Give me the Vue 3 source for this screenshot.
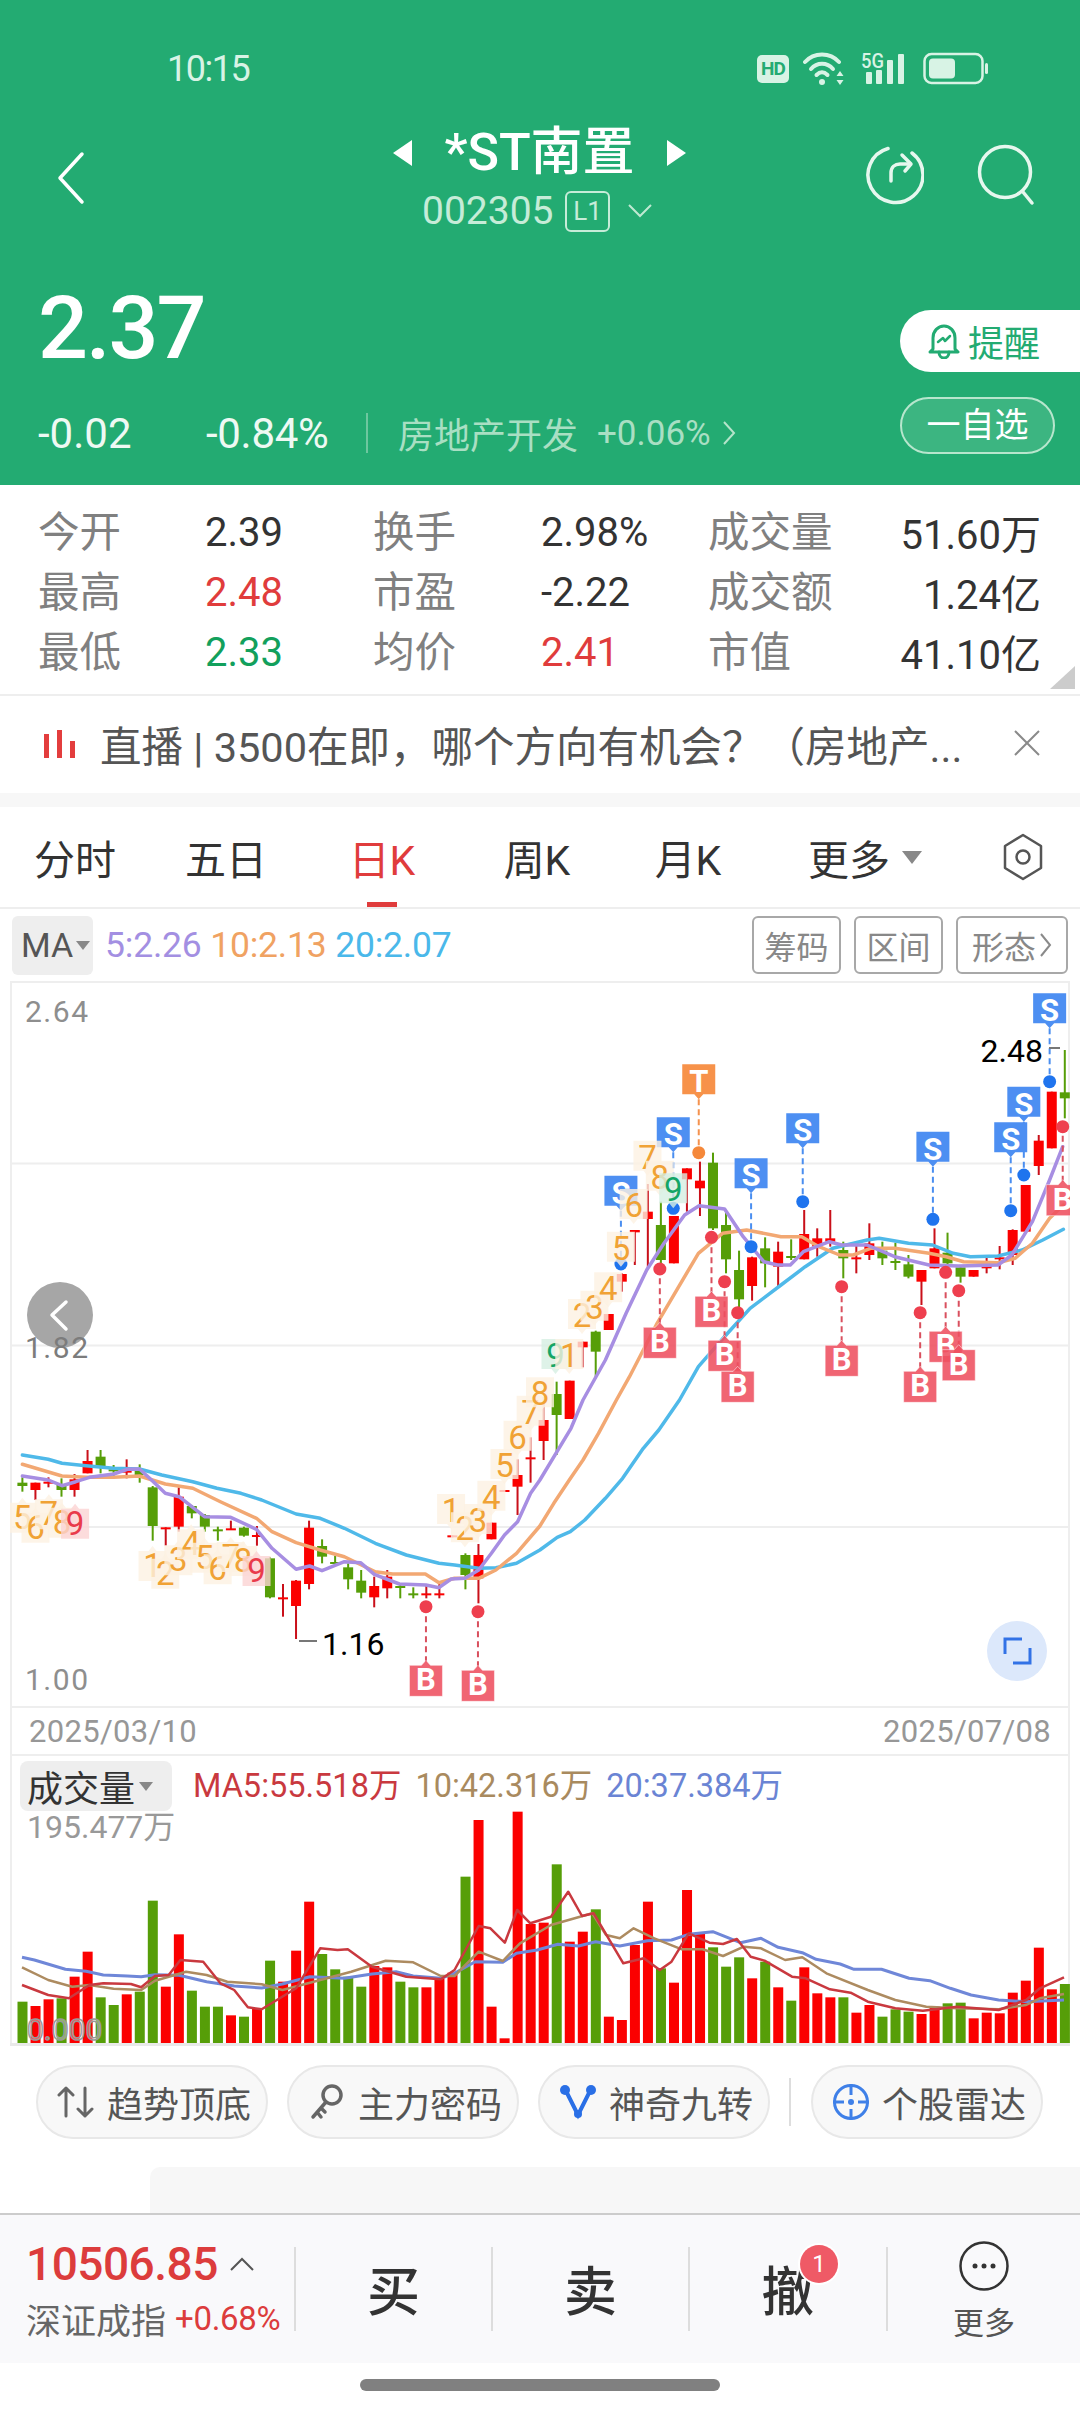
<script setup>
const z5 = ([X, Y]) => [X / 2.904, 1400 + Y / 3]
const z4 = ([X, Y]) => [540 + X / 2.904, 980 + Y / 3]
const z6 = ([X, Y]) => [540 + X / 2.904, 1400 + Y / 3]
const z7 = ([X, Y]) => [X / 1.452, 1750 + Y / 3]
const pts = (a) => a.map((p) => p[0].toFixed(1) + ',' + p[1].toFixed(1)).join(' ')

// colour, wick top, wick bottom, body top, body bottom, in crop units
const rawA = [
  ['g',232,275,248,258],['r',248,300,248,270],['r',232,262,245,248],['g',235,290,252,270],['r',222,290,238,270],
  ['r',150,220,183,220],['g',150,220,170,200],['g',195,235,208,214],['r',178,235,208,218],['g',193,248,210,225],
  ['g',258,422,262,378],['r',382,437,382,388],['r',262,395,290,380],['g',315,355,318,340],['g',342,395,345,380],
  ['g',380,422,388,392],['r',362,390,385,390],['g',380,410,383,407],['r',378,437,405,408],['g',472,595,475,592],
  ['r',552,650,592,596],['r',540,717,542,618],['r',362,568,383,552],['g',418,490,438,470],['g',468,490,486,490],
  ['g',490,568,502,538],['g',510,595,542,578],['r',530,622,558,592],['r',510,595,530,565],['g',555,595,558,563],
  ['g',562,595,580,583],['r',552,595,580,583],['r',552,595,580,583],['r',406,410,406,410],['g',460,568,465,525],
  ['r',432,610,465,535],['r',368,418,368,418],['r',270,274,270,274],['r',178,345,225,260],['r',112,248,172,177],
]
const rawB = [
  ['r',1251,1440,1320,1383],
  ['g',1205,1425,1242,1305],['r',1202,1317,1202,1317],['r',1085,1162,1085,1102],['g',1052,1195,1055,1115],['r',1002,1050,1002,1050],
  ['r',880,935,882,905],['r',750,855,750,757],['r',612,868,695,717],['g',665,865,735,840],['r',708,850,708,850],
  ['r',565,695,565,598],['r',545,708,602,625],['g',518,750,548,745],['g',698,880,735,838],['g',812,985,870,958],
  ['r',830,962,832,918],['g',772,922,805,850],['r',785,918,815,860],['g',778,840,828,832],['r',690,838,762,838],
  ['r',745,830,775,800],['r',690,800,775,785],['g',785,895,810,835],['r',795,880,832,838],['r',730,840,790,825],
  ['g',785,855,812,835],['g',788,870,843,848],['g',825,895,853,890],['r',870,975,870,905],['r',745,865,805,865],
  ['g',758,870,818,850],['g',855,908,862,890],['r',870,890,870,890],['r',828,880,852,865],['r',798,868,832,838],
  ['r',748,855,750,825],['r',615,755,615,755],['r',465,585,482,558],['r',335,505,335,505],['g',210,415,337,355],
]
const yA = (Y) => 1400 + Y / 3
const yB = (Y) => 980 + Y / 3
const candles = [
  ...rawA.map((c) => [c[0], yA(c[1]), yA(c[2]), yA(c[3]), yA(c[4])]),
  ...rawB.map((c) => [c[0], yB(c[1]), yB(c[2]), yB(c[3]), yB(c[4])]),
].map((c, i) => ({
  x: 22.4 + 13.03 * i,
  fill: c[0] === 'r' ? '#fb0000' : '#569e08',
  wick: c[0] === 'r' ? '#c9101a' : '#569e08',
  wt: c[1],
  wh: Math.max(c[2] - c[1], 2),
  bt: c[3],
  bh: Math.max(c[4] - c[3], 2),
}))

const maBlue = pts([
  ...[[65,165],[140,178],[180,190],[250,197],[330,205],[405,207],[470,225],[560,245],[630,265],[700,280],[760,300],[860,342],[930,355],[1000,385],[1090,430],[1180,465],[1275,490],[1320,495],[1390,505],[1440,503],[1500,490],[1568,450]].map(z5),
  ...[[50,412],[88,395],[130,360],[190,295],[240,235],[300,145],[345,90],[405,0]].map(z6),
  ...[[460,1160],[540,1065],[610,985],[700,915],[770,860],[850,805],[950,780],[985,775],[1070,790],[1140,795],[1200,820],[1250,830],[1330,828],[1400,810],[1460,780],[1520,748]].map(z4),
])
const maOrange = pts([
  ...[[65,193],[180,228],[250,232],[330,232],[405,228],[480,252],[560,265],[640,305],[745,355],[790,395],[860,428],[930,450],[1000,470],[1090,515],[1140,522],[1235,522],[1275,548],[1320,535],[1390,535],[1440,510],[1500,460],[1568,378]].map(z5),
  ...[[40,310],[85,240],[125,180],[170,100],[222,0]].map(z6),
  ...[[260,1190],[340,1030],[460,820],[530,760],[600,750],[700,770],[760,770],[810,800],[870,825],[910,825],[960,805],[1030,805],[1130,820],[1180,830],[1230,845],[1330,848],[1380,835],[1430,790],[1480,715],[1520,675]].map(z4),
])
const maPurple = pts([
  ...[[65,228],[140,240],[180,257],[220,245],[260,232],[330,222],[370,208],[405,207],[440,240],[480,280],[520,290],[594,350],[670,352],[745,388],[790,445],[860,508],[899,498],[935,512],[1000,485],[1047,488],[1087,523],[1160,552],[1237,555],[1275,563],[1310,537],[1350,535],[1390,510],[1427,460],[1465,405],[1503,365],[1541,280],[1568,240]].map(z5),
  ...[[90,85],[125,0]].map(z6),
  ...[[190,1140],[250,1000],[310,870],[360,790],[420,705],[462,677],[536,687],[590,770],[650,845],[690,855],[727,855],[765,815],[840,785],[876,795],[950,795],[1030,830],[1130,855],[1216,858],[1330,855],[1370,825],[1430,725],[1480,600],[1518,500]].map(z4),
])

const mk = (t, X, Y, dotY, src) => {
  const f = src === 5 ? z5 : z4
  const [x, y] = f([X, Y])
  const [, dy] = f([X, dotY])
  return { t, x, y, dy }
}
const sells = [
  ['S',235,587,852],['S',387,412,685],['S',613,535,800],['S',763,400,665],
  ['S',1141,455,718],['S',1367,427,692],['S',1405,320,585],['S',1480,40,305],['T',461,253,518],
].map((m) => mk(m[0], m[1], m[2], m[3], 4))
const buys = [
  ...[[348,1033,867],[498,940,772],[536,1072,905],[574,1165,998],[876,1087,920],[1104,1165,998],[1178,1045,877],[1216,1100,932],[1518,605,440]].map((m) => mk('B', m[0], m[1], m[2], 4)),
  ...[[1237,787,620],[1388,802,635]].map((m) => mk('B', m[0], m[1], m[2], 5)),
]
const sPath = (m) => `M${m.x - 16.5} ${m.y}h33v30h-12l-4.5 5-4.5-5h-12z`
const bPath = (m) => `M${m.x - 16.5} ${m.y + 3}h12l4.5-5 4.5 5h12v31h-33z`

const lab = (n, X, Y, src, dir, tone = 'o') => {
  const [x, y] = (src === 5 ? z5 : z4)([X, Y])
  return { n, x, y, dir, tone }
}
const labels = [
  lab(5,65,350,5,'u'),lab(6,103,380,5,'u'),lab(7,142,340,5,'u'),lab(8,180,365,5,'u'),lab(9,218,368,5,'u','r'),
  lab(1,443,495,5,'u'),lab(2,480,518,5,'u'),lab(3,518,478,5,'u'),lab(4,555,430,5,'u'),lab(5,594,470,5,'u'),
  lab(6,632,505,5,'u'),lab(7,670,468,5,'u'),lab(8,706,480,5,'u'),lab(9,745,510,5,'u','r'),
  lab(1,1310,330,5,'d'),lab(2,1350,385,5,'d'),lab(3,1388,360,5,'d'),lab(4,1427,290,5,'d'),lab(5,1465,195,5,'d'),
  lab(6,1503,110,5,'d'),lab(7,1541,35,5,'d'),lab(8,0,1240,4,'d'),lab(9,45,1125,4,'d','g'),
  lab(1,85,1125,4,'d'),lab(2,122,1005,4,'d'),lab(3,158,980,4,'d'),lab(4,198,925,4,'d'),lab(5,235,803,4,'d'),
  lab(6,272,675,4,'d'),lab(7,312,530,4,'d'),lab(8,348,590,4,'d'),lab(9,387,628,4,'d','g'),
]
const labPath = (l) => l.dir === 'd'
  ? `M${l.x - 14} ${l.y - 16}h28v30h-10l-4 5-4-5h-10z`
  : `M${l.x - 14} ${l.y - 14}h10l4-5 4 5h10v30h-28z`

const volRaw = 'g755 r768 r748 g745 r680 r605 g742 g765 r733 g725 g452 r710 r553 g722 g770 g770 r796 g800 r775 g632 r695 r602 r455 g612 g658 g680 g710 r648 r652 g695 g712 r712 r685 r668 g380 r210 r770 r865 r185 r522 r518 g343 r575 r545 g478 r800 r810 r585 r455 g655 r698 r420 r552 g592 g650 g622 r685 g635 r712 g752 r652 r730 r742 g742 r788 r765 g800 g778 g785 r792 r770 g760 g758 r805 r788 r790 r728 r692 r593 r718 g702'
const vols = volRaw.split(' ').map((s, i) => {
  const top = 1750 + Number(s.slice(1)) / 3
  return { x: 17.5 + 13.03 * i, y: top, h: 2043 - top, fill: s[0] === 'r' ? '#fb0000' : '#569e08' }
})
const volBlue = pts([[32,622],[50,630],[95,658],[125,664],[150,675],[185,678],[205,680],[225,674],[260,676],[300,695],[340,708],[380,714],[410,702],[450,680],[500,685],[540,672],[575,665],[600,678],[640,685],[660,670],[690,635],[730,637],[750,610],[780,600],[810,583],[840,588],[865,575],[900,588],[940,572],[975,570],[1000,553],[1035,545],[1075,578],[1105,565],[1130,592],[1165,608],[1185,628],[1220,642],[1240,658],[1280,658],[1320,685],[1350,692],[1380,715],[1410,735],[1450,750],[1490,755],[1545,750]].map(z7))
const volTan = pts([[32,652],[70,690],[105,710],[130,705],[165,716],[205,720],[225,692],[270,665],[300,675],[330,695],[380,703],[410,720],[450,698],[510,665],[560,632],[600,637],[640,678],[660,678],[695,605],[730,633],[755,580],[800,525],[860,490],[880,555],[900,565],[920,535],[950,565],[990,598],[1020,598],[1050,618],[1080,590],[1105,595],[1140,630],[1165,622],[1200,670],[1260,720],[1300,750],[1345,770],[1390,775],[1450,778],[1490,765],[1510,745],[1545,732]].map(z7))
const volRed = pts([[32,705],[70,735],[100,745],[130,705],[150,700],[190,702],[205,712],[225,678],[245,675],[262,630],[295,635],[320,700],[340,720],[360,772],[380,778],[430,715],[465,595],[490,600],[505,598],[540,650],[590,680],[640,688],[660,660],[695,528],[712,535],[733,578],[751,480],[770,520],[800,500],[825,425],[845,498],[862,490],[905,640],[935,625],[958,660],[975,635],[1000,550],[1030,578],[1050,582],[1070,567],[1090,620],[1110,632],[1150,680],[1170,685],[1205,718],[1235,728],[1260,755],[1300,775],[1340,782],[1390,770],[1450,780],[1490,750],[1510,715],[1545,682]].map(z7))

const stats = [
  ['今开','2.39','','换手','2.98%','','成交量','51.60万'],
  ['最高','2.48','up','市盈','-2.22','','成交额','1.24亿'],
  ['最低','2.33','down','均价','2.41','up','市值','41.10亿'],
]
const tabs = ['分时','五日','日K','周K','月K']
</script>

<template>
  <div class="page">
    <header class="head">
      <div class="status">
        <span class="time">10:15</span>
        <div class="status-icons">
          <span class="hd">HD</span>
          <svg class="ic-wifi" width="44" height="36" viewBox="0 0 44 36" fill="none" stroke="#d8f3e5" stroke-width="4" stroke-linecap="round">
            <path d="M2 11C11 1 27 1 36 11"/><path d="M8 18c6-7 16-7 22 0"/><path d="M13.500 24c3.500-3.500 7.500-3.500 11 0"/>
            <circle cx="19" cy="31" r="3" fill="#d8f3e5" stroke="none"/>
            <path d="M37 20l3.500 5h-7zM37 34l3.500-5h-7z" fill="#d8f3e5" stroke="none"/>
          </svg>
          <svg class="ic-sig" width="48" height="34" viewBox="0 0 48 34">
            <text x="0" y="16" font-size="20" font-weight="500" fill="#d8f3e5" font-family="Roboto" textLength="23" lengthAdjust="spacingAndGlyphs">5G</text>
            <rect x="5" y="20" width="6" height="12" rx="1" fill="#d8f3e5"/>
            <rect x="15" y="18" width="6" height="14" rx="1" fill="#d8f3e5"/>
            <rect x="26" y="8" width="6" height="24" rx="1" fill="#d8f3e5"/>
            <rect x="37" y="2" width="6" height="30" rx="1" fill="#d8f3e5"/>
          </svg>
          <svg width="66" height="34" viewBox="0 0 66 34">
            <rect x="1.500" y="2" width="58" height="29" rx="7" fill="none" stroke="#d8f3e5" stroke-width="2.500"/>
            <rect x="6" y="6.500" width="26" height="20" rx="4" fill="#d8f3e5"/>
            <rect x="62" y="11" width="3" height="11" rx="1.500" fill="#d8f3e5"/>
          </svg>
        </div>
      </div>

      <div class="nav">
        <div class="nav-side">
          <svg width="32" height="54" viewBox="0 0 32 54" fill="none" stroke="#fff" stroke-width="3.500" stroke-linecap="round" stroke-linejoin="round"><path d="M27 3L5 27l22 24"/></svg>
        </div>
        <div class="nav-mid">
          <div class="title-row"><i class="tri-l"></i><span class="title">*ST南置</span><i class="tri-r"></i></div>
          <div class="code-row">
            <span class="code">002305</span><span class="l1">L1</span>
            <svg width="24" height="14" viewBox="0 0 24 14" fill="none" stroke="#bfe9d2" stroke-width="2"><path d="M1 1l11 11L23 1"/></svg>
          </div>
        </div>
        <div class="nav-side nav-right">
          <svg width="62" height="62" viewBox="0 0 62 62" fill="none" stroke="#e6f7ee" stroke-width="3.500" stroke-linecap="round" stroke-linejoin="round">
            <path d="M26 4.500A27.500 27.500 0 1 0 50 9"/>
            <path d="M29 37V29c0-6 4-9 9-9h10"/>
            <path d="M40 11l9 9-6 7"/>
          </svg>
          <svg width="62" height="62" viewBox="0 0 62 62" fill="none" stroke="#e6f7ee" stroke-width="3.500" stroke-linecap="round">
            <circle cx="28" cy="28" r="25.500"/><path d="M46 48l9 11"/>
          </svg>
        </div>
      </div>

      <div class="quote">
        <div class="quote-left">
          <div class="price">2.37</div>
          <div class="delta-row">
            <span class="d1">-0.02</span><span class="d2">-0.84%</span><i class="d-sep"></i>
            <span class="sector">房地产开发</span><span class="sector-pct">+0.06%</span>
            <svg width="14" height="26" viewBox="0 0 14 26" fill="none" stroke="#b4e4ca" stroke-width="2"><path d="M2 2l10 11L2 24"/></svg>
          </div>
        </div>
        <div class="quote-right">
          <div class="remind">
            <svg width="32" height="36" viewBox="0 0 32 36" fill="none" stroke="#23ab72" stroke-width="3" stroke-linejoin="round" stroke-linecap="round">
              <path d="M5 26V15C5 8 10 3 16 3s11 5 11 12v11l3 3H2z"/><path d="M11 29c0 8 10 8 10 0"/><path d="M10 19l5-4 2 3 5-5" stroke-width="2.500"/>
            </svg>
            <span>提醒</span>
          </div>
          <div class="watch">一自选</div>
        </div>
      </div>
    </header>

    <section class="stats">
      <template v-for="row in stats" :key="row[0]">
        <span class="s-lab">{{ row[0] }}</span><span class="s-val" :class="row[2]">{{ row[1] }}</span>
        <span class="s-lab">{{ row[3] }}</span><span class="s-val" :class="row[5]">{{ row[4] }}</span>
        <span class="s-lab">{{ row[6] }}</span><span class="s-val s-end">{{ row[7] }}</span>
      </template>
      <i class="corner"></i>
    </section>

    <div class="live">
      <svg width="32" height="28" viewBox="0 0 32 28" fill="#e33d3d"><rect x="0" y="4" width="5" height="24"/><rect x="13" y="0" width="5" height="28"/><rect x="26" y="11" width="5" height="17"/></svg>
      <span class="live-text">直播 | 3500在即，哪个方向有机会？（房地产...</span>
      <svg class="live-x" width="30" height="26" viewBox="0 0 30 26" stroke="#8a8a8a" stroke-width="2" fill="none"><path d="M3 1l24 24M27 1L3 25"/></svg>
    </div>
    <div class="band"></div>

    <nav class="tabs">
      <div v-for="t in tabs" :key="t" class="tab" :class="{ active: t === '日K' }">{{ t }}</div>
      <div class="tab">更多<i class="tab-tri"></i></div>
      <div class="tab">
        <svg width="42" height="48" viewBox="0 0 42 48" fill="none" stroke="#555" stroke-width="2.500" stroke-linejoin="round"><path d="M21 2l18 11v22L21 46 3 35V13z"/><circle cx="21" cy="24" r="6.500"/></svg>
      </div>
    </nav>

    <div class="ma-row">
      <div class="ma-box">MA<i class="mini-tri"></i></div>
      <div class="legend"><span class="c1">5:2.26</span> <span class="c2">10:2.13</span> <span class="c3">20:2.07</span></div>
      <div class="ma-btns">
        <span class="ma-btn w1">筹码</span><span class="ma-btn w1">区间</span>
        <span class="ma-btn w2">形态<svg width="13" height="26" viewBox="0 0 13 26" fill="none" stroke="#8a8a8a" stroke-width="2"><path d="M2 2l9 11-9 11"/></svg></span>
      </div>
    </div>

    <div class="chart-wrap">
      <svg class="chart" width="1060" height="727" viewBox="10 981 1060 727">
        <rect x="11" y="982" width="1058" height="725" fill="#fff" stroke="#eee" stroke-width="2"/>
        <path d="M11 1163.500H1069M11 1345.500H1069M11 1527H1069" stroke="#eee" stroke-width="2"/>

        <g v-for="(c, i) in candles" :key="i">
          <rect :x="c.x - 1" :y="c.wt" width="2" :height="c.wh" :fill="c.wick"/>
          <rect :x="c.x - 5" :y="c.bt" width="10" :height="c.bh" :fill="c.fill"/>
        </g>

        <polyline :points="maBlue" fill="none" stroke="#4fb9e9" stroke-width="3.500" stroke-linejoin="round" stroke-linecap="round"/>
        <polyline :points="maOrange" fill="none" stroke="#f2a873" stroke-width="3.500" stroke-linejoin="round" stroke-linecap="round"/>
        <polyline :points="maPurple" fill="none" stroke="#a78ee2" stroke-width="3.500" stroke-linejoin="round" stroke-linecap="round"/>

        <g v-for="(m, i) in sells" :key="'d' + i">
          <line :x1="m.x" :y1="m.y + 35" :x2="m.x" :y2="m.dy" :stroke="m.t === 'T' ? '#f5924e' : '#4a8ef0'" stroke-width="2" stroke-dasharray="6 4"/>
          <circle :cx="m.x" :cy="m.dy" r="6.500" :fill="m.t === 'T' ? '#f5883a' : '#1f74ee'"/>
        </g>
        <g v-for="(m, i) in buys" :key="'e' + i">
          <line :x1="m.x" :y1="m.y" :x2="m.x" :y2="m.dy" stroke="#d9505e" stroke-width="2" stroke-dasharray="6 4"/>
          <circle :cx="m.x" :cy="m.dy" r="6.500" fill="#ee3f4e"/>
        </g>

        <g v-for="(m, i) in buys" :key="'b' + i">
          <path :d="bPath(m)" fill="#ee5060" fill-opacity=".88" stroke="#fff" stroke-opacity=".5"/>
          <text :x="m.x" :y="m.y + 28" class="mk-t">B</text>
        </g>
        <g v-for="(m, i) in sells" :key="'s' + i">
          <path :d="sPath(m)" :fill="m.t === 'T' ? '#f7924a' : '#4d8ff2'"/>
          <text :x="m.x" :y="m.y + 28" class="mk-t">{{ m.t }}</text>
        </g>

        <g v-for="(l, i) in labels" :key="'l' + i">
          <path :d="labPath(l)" :fill="l.tone === 'r' ? '#fbd3d3' : l.tone === 'g' ? '#d6efe2' : '#fdf1e2'" fill-opacity=".8"/>
          <text :x="l.x" :y="l.y + 12" class="lab-t" :fill="l.tone === 'r' ? '#e93b4b' : l.tone === 'g' ? '#14a566' : '#f0a235'">{{ l.n }}</text>
        </g>

        <text x="25" y="1022" class="axis">2.64</text>
        <circle cx="60" cy="1315" r="33" fill="#a6a6a6"/>
        <path d="M66 1302l-14 13 14 14" fill="none" stroke="#fff" stroke-width="3.500" stroke-linecap="round" stroke-linejoin="round"/>
        <text x="25" y="1358" class="axis axis-dark">1.82</text>
        <text x="25" y="1690" class="axis">1.00</text>

        <text x="1043" y="1062" class="ext" text-anchor="end">2.48</text>
        <path d="M1049 1048H1060" stroke="#777" stroke-width="2"/>
        <text x="322" y="1655" class="ext">1.16</text>
        <path d="M299 1641H317" stroke="#777" stroke-width="2"/>

        <circle cx="1017" cy="1651" r="30" fill="#dce8fb"/>
        <path d="M1005 1654v-15h17M1030 1648v15h-17" fill="none" stroke="#3272e6" stroke-width="3"/>
      </svg>
      <div class="dates"><span>2025/03/10</span><span>2025/07/08</span></div>
    </div>

    <div class="vol">
      <div class="vol-head">
        <div class="vol-box">成交量<i class="mini-tri"></i></div>
        <div class="vol-legend"><span class="v1">MA5:55.518万</span><span class="v2">10:42.316万</span><span class="v3">20:37.384万</span></div>
      </div>
      <svg class="vol-svg" width="1060" height="235" viewBox="10 1811 1060 235">
        <rect v-for="(b, i) in vols" :key="i" :x="b.x" :y="b.y" width="10" :height="b.h" :fill="b.fill"/>
        <polyline :points="volBlue" fill="none" stroke="#6f87d8" stroke-width="3" stroke-linejoin="round"/>
        <polyline :points="volTan" fill="none" stroke="#ad8b60" stroke-width="2.500" stroke-linejoin="round"/>
        <polyline :points="volRed" fill="none" stroke="#c9393f" stroke-width="2.500" stroke-linejoin="round"/>
        <text x="27" y="1838" class="vol-max">195.477万</text>
        <text x="27" y="2040" class="vol-zero">0.000</text>
        <rect x="10" y="2043" width="1060" height="3" fill="#e9e9e9"/>
      </svg>
    </div>

    <div class="chips">
      <div class="chip">
        <svg width="38" height="34" viewBox="0 0 38 34" fill="none" stroke="#666" stroke-width="3" stroke-linecap="round" stroke-linejoin="round"><path d="M9 31V3M2 10l7-7 7 7M28 3v28M21 24l7 7 7-7"/></svg>
        <span>趋势顶底</span>
      </div>
      <div class="chip">
        <svg width="38" height="38" viewBox="0 0 38 38" fill="none" stroke="#666" stroke-width="3.500" stroke-linecap="round"><circle cx="24" cy="12" r="9"/><path d="M18 19L5 34M9 29l4 5M13 25l4 4"/></svg>
        <span>主力密码</span>
      </div>
      <div class="chip">
        <svg width="38" height="36" viewBox="0 0 38 36" fill="none" stroke="#2a6fe6" stroke-width="4"><path d="M7 7l12 24L31 7"/><circle cx="6" cy="6" r="5" fill="#2a6fe6" stroke="none"/><circle cx="32" cy="6" r="5" fill="#2a6fe6" stroke="none"/><circle cx="19" cy="30" r="4" fill="#2a6fe6" stroke="none"/></svg>
        <span>神奇九转</span>
      </div>
      <i class="chip-sep"></i>
      <div class="chip">
        <svg width="38" height="38" viewBox="0 0 38 38" fill="none" stroke="#3f80e8" stroke-width="3"><circle cx="19" cy="19" r="16.500"/><path d="M19 1v11M19 26v11M1 19h11M26 19h11"/><circle cx="19" cy="19" r="3" fill="#3f80e8" stroke="none"/></svg>
        <span>个股雷达</span>
      </div>
    </div>

    <div class="ghost"></div>

    <footer class="foot">
      <div class="idx">
        <div class="idx-top"><span class="idx-num">10506.85</span>
          <svg width="24" height="14" viewBox="0 0 24 14" fill="none" stroke="#555" stroke-width="2"><path d="M1 13L12 2l11 11"/></svg>
        </div>
        <div class="idx-bot"><span class="idx-name">深证成指</span><span class="idx-pct">+0.68%</span></div>
      </div>
      <i class="f-sep"></i>
      <div class="f-btn">买</div>
      <i class="f-sep"></i>
      <div class="f-btn">卖</div>
      <i class="f-sep"></i>
      <div class="f-btn f-btn-wide">撤<span class="badge">1</span></div>
      <i class="f-sep"></i>
      <div class="f-more">
        <svg width="50" height="50" viewBox="0 0 50 50" fill="none"><circle cx="25" cy="25" r="23.500" stroke="#333" stroke-width="2.500"/><circle cx="16" cy="25" r="2.500" fill="#333"/><circle cx="25" cy="25" r="2.500" fill="#333"/><circle cx="34" cy="25" r="2.500" fill="#333"/></svg>
        <span>更多</span>
      </div>
    </footer>

    <div class="home"></div>
  </div>
</template>

<style scoped>
.page { width: 1080px; height: 2412px; overflow: hidden; background: #fff; font-family: Roboto, "Noto Sans CJK SC", sans-serif; color: #333; }
i { display: block; font-style: normal; }

.head { height: 485px; background: #23ab72; display: flex; flex-direction: column; color: #fff; }
.status { height: 40px; margin-top: 49px; display: flex; align-items: center; padding-left: 167px; padding-right: 91px; justify-content: space-between; }
.time { font-size: 36px; color: #d8f3e5; letter-spacing: -1.500px; }
.status-icons { display: flex; align-items: center; gap: 14px; }
.hd { width: 32px; height: 28px; border-radius: 5px; background: #d8f3e5; color: #23ab72; font-size: 19px; font-weight: 700; text-align: center; line-height: 28px; letter-spacing: -1px; }
.ic-sig { overflow: visible; }

.nav { height: 113px; margin-top: 34px; display: flex; }
.nav-side { width: 240px; padding: 28px 0 0 55px; box-sizing: content-box; }
.nav-right { display: flex; justify-content: flex-end; gap: 53px; padding: 21px 41px 0 0; }
.nav-mid { flex: 1; display: flex; flex-direction: column; align-items: center; }
.title-row { height: 60px; display: flex; align-items: center; gap: 32px; padding-right: 15px; }
.title { font-size: 52px; font-weight: 500; line-height: 60px; }
.tri-l, .tri-r { width: 0; height: 0; border-top: 13px solid transparent; border-bottom: 13px solid transparent; }
.tri-l { border-right: 19px solid #fff; }
.tri-r { border-left: 19px solid #fff; }
.code-row { height: 50px; margin-top: 3px; display: flex; align-items: center; color: #c6ecd8; padding-right: 20px; }
.code { font-size: 39px; width: 143px; }
.l1 { width: 45px; height: 41px; border: 2px solid #c6ecd8; border-radius: 6px; box-sizing: border-box; font-size: 26px; line-height: 37px; text-align: center; margin-right: 18px; }

.quote { margin-top: 52px; display: flex; justify-content: space-between; padding-left: 38px; }
.price { font-size: 88px; font-weight: 500; line-height: 80px; height: 80px; letter-spacing: -2px; }
.delta-row { margin-top: 43px; height: 44px; display: flex; align-items: center; font-size: 42px; }
.d1 { width: 168px; color: #eef9f3; }
.d2 { width: 160px; color: #eef9f3; letter-spacing: -.3px; }
.d-sep { width: 2px; height: 40px; background: #6dc79f; margin-right: 30px; }
.sector { font-size: 36px; color: #a9dfc3; width: 199px; }
.sector-pct { font-size: 35px; color: #a9dfc3; width: 125px; white-space: nowrap; }
.quote-right { display: flex; flex-direction: column; align-items: flex-end; padding-top: 22px; width: 180px; }
.remind { width: 180px; height: 62px; background: #fff; border-radius: 31px 0 0 31px; display: flex; align-items: center; gap: 8px; padding-left: 28px; box-sizing: border-box; color: #23ab72; font-size: 36px; }
.watch { width: 155px; height: 57px; margin: 25px 25px 0 0; border: 2px solid #b7e6cd; border-radius: 29px; box-sizing: border-box; background: #3cb581; text-align: center; line-height: 52px; font-size: 34px; color: #fff; }

.stats { height: 211px; box-sizing: border-box; padding: 17px 39px 0 38px; display: grid; grid-template-columns: 167px 168px 168px 167px 1fr auto; grid-auto-rows: 60px; align-items: center; border-bottom: 2px solid #eee; position: relative; }
.s-lab { font-size: 41.500px; color: #808080; padding-bottom: 6px; }
.s-val { font-size: 40px; color: #333; }
.s-end { text-align: right; }
.up { color: #e03c3c; }
.down { color: #12a05c; }
.corner { position: absolute; right: 5px; bottom: 5px; width: 25px; height: 23px; background: #ccc; clip-path: polygon(100% 0, 100% 100%, 0 100%); }

.live { height: 97px; box-sizing: border-box; padding: 0 0 2px 44px; display: flex; align-items: center; }
.live-text { font-size: 41.500px; color: #555; margin-left: 24px; width: 912px; white-space: nowrap; overflow: hidden; }
.live-x { margin-top: -2px; }
.band { height: 14px; background: #f7f7f7; }

.tabs { height: 102px; box-sizing: border-box; display: grid; grid-template-columns: 150px 152px 160px 150px 152px 202px 1fr; border-bottom: 2px solid #eee; }
.tab { position: relative; display: flex; align-items: center; justify-content: center; font-size: 41px; color: #333; }
.tab.active { color: #e03c3c; }
.tab.active::after { content: ""; position: absolute; left: 65px; bottom: 0; width: 30px; height: 5px; background: #e03c3c; }
.tab-tri { width: 0; height: 0; margin-left: 12px; border-left: 10px solid transparent; border-right: 10px solid transparent; border-top: 13px solid #888; }

.ma-row { height: 72px; display: flex; align-items: center; padding: 0 12px; }
.ma-box { width: 81px; height: 59px; border-radius: 6px; background: #eee; display: flex; align-items: center; padding-left: 9px; box-sizing: border-box; font-size: 34px; color: #555; gap: 3px; }
.mini-tri { width: 0; height: 0; border-left: 7px solid transparent; border-right: 7px solid transparent; border-top: 9px solid #888; }
.legend { margin-left: 12px; font-size: 35.500px; white-space: pre; letter-spacing: -.2px; }
.c1 { color: #a38fe2; }
.c2 { color: #f0a262; }
.c3 { color: #4ab8ea; }
.ma-btns { margin-left: auto; display: flex; gap: 13px; }
.ma-btn { height: 58px; border: 2px solid #a8a8a8; border-radius: 6px; box-sizing: border-box; display: flex; align-items: center; justify-content: center; font-size: 32px; color: #888; gap: 3px; }
.w1 { width: 89px; }
.w2 { width: 112px; }

.chart-wrap { margin-left: 10px; width: 1060px; }
.chart { display: block; overflow: hidden; }
.mk-t { font-size: 31px; font-weight: 700; fill: #fff; text-anchor: middle; font-family: Roboto, sans-serif; }
.lab-t { font-size: 33px; text-anchor: middle; font-family: Roboto, sans-serif; }
.axis { font-size: 30px; fill: #8e8e8e; letter-spacing: 1.500px; font-family: Roboto, sans-serif; }
.axis-dark { fill: #7c7c7c; }
.ext { font-size: 32px; fill: #000; font-family: Roboto, sans-serif; }
.dates { height: 48px; box-sizing: border-box; border: solid #eee; border-width: 0 2px 2px; display: flex; justify-content: space-between; align-items: center; padding: 0 17px; font-size: 31px; color: #979797; letter-spacing: .3px; }

.vol { margin-left: 10px; width: 1060px; box-sizing: border-box; border: solid #eee; border-width: 0 2px; }
.vol-head { height: 55px; display: flex; align-items: flex-start; padding: 5px 0 0 8px; box-sizing: border-box; margin-right: -2px; }
.vol-box { width: 152px; height: 50px; border-radius: 8px; background: #eee; display: flex; align-items: center; padding-left: 7px; box-sizing: border-box; gap: 4px; font-size: 36px; color: #333; }
.vol-legend { margin-left: 21px; display: flex; gap: 14px; font-size: 32.500px; line-height: 50px; white-space: nowrap; }
.v1 { color: #c9393f; }
.v2 { color: #a98a5e; }
.v3 { color: #6a84d4; }
.vol-svg { display: block; margin-left: -2px; overflow: visible; }
.vol-max { font-size: 32px; fill: #999; font-family: Roboto, "Noto Sans CJK SC", sans-serif; }
.vol-zero { font-size: 30px; fill: #fff; fill-opacity: .35; stroke: #999; stroke-width: 1.500; font-family: Roboto, sans-serif; }

.chips { margin-top: 19px; padding-left: 36px; height: 74px; display: flex; align-items: center; }
.chip { width: 232px; height: 74px; margin-right: 19px; box-sizing: border-box; background: #f8f8f8; border: 2px solid #e8e8e8; border-radius: 37px; display: flex; align-items: center; padding-left: 19px; gap: 12px; font-size: 36px; color: #555; white-space: nowrap; }
.chip-sep { width: 2px; height: 48px; background: #ddd; margin-right: 20px; }

.ghost { margin: 28px 0 0 150px; height: 46px; background: #f7f7f7; border-radius: 10px 0 0 0; }

.foot { height: 150px; box-sizing: border-box; border-top: 2px solid #ccc; background: #f9f9fb; display: flex; align-items: center; }
.idx { width: 294px; padding-left: 26px; box-sizing: border-box; }
.idx-top { display: flex; align-items: center; gap: 12px; height: 48px; }
.idx-num { font-size: 46px; font-weight: 500; color: #dc3c3c; letter-spacing: -.5px; }
.idx-bot { display: flex; align-items: center; gap: 9px; margin-top: 10px; height: 40px; white-space: nowrap; }
.idx-name { font-size: 35px; color: #666; }
.idx-pct { font-size: 33px; color: #dc3c3c; letter-spacing: -.3px; }
.f-sep { width: 2px; height: 84px; background: #ddd; }
.f-btn { width: 195px; padding-top: 8px; font-size: 53px; font-weight: 500; color: #333; text-align: center; position: relative; line-height: 60px; }
.f-btn-wide { width: 196px; }
.badge { position: absolute; left: 110px; top: -10px; width: 38px; height: 38px; border-radius: 50%; background: #ef5a66; color: #fff; font-size: 24px; font-weight: 400; line-height: 38px; text-align: center; box-shadow: 0 0 0 2px #fff; }
.f-more { flex: 1; display: flex; flex-direction: column; align-items: center; padding-top: 7px; font-size: 31px; color: #555; gap: 12px; line-height: 42px; }

.home { width: 360px; height: 12px; margin: 16px auto 0; border-radius: 6px; background: #808080; }
</style>
<style>
html, body { margin: 0; background: #fff; }
</style>
